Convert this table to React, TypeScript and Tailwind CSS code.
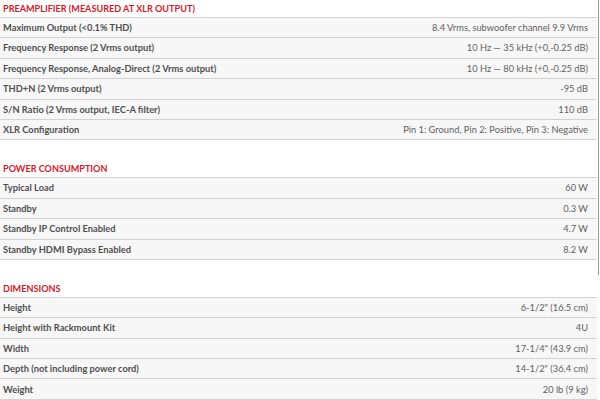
import React from "react";

type Row = [string, string];
const sections: { title: string; rows: Row[] }[] = [
  {
    title: "PREAMPLIFIER (MEASURED AT XLR OUTPUT)",
    rows: [
      ["Maximum Output (<0.1% THD)", "8.4 Vrms, subwoofer channel 9.9 Vrms"],
      ["Frequency Response (2 Vrms output)", "10 Hz — 35 kHz (+0,-0.25 dB)"],
      ["Frequency Response, Analog-Direct (2 Vrms output)", "10 Hz — 80 kHz (+0,-0.25 dB)"],
      ["THD+N (2 Vrms output)", "-95 dB"],
      ["S/N Ratio (2 Vrms output, IEC-A filter)", "110 dB"],
      ["XLR Configuration", "Pin 1: Ground, Pin 2: Positive, Pin 3: Negative"],
    ],
  },
  {
    title: "POWER CONSUMPTION",
    rows: [
      ["Typical Load", "60 W"],
      ["Standby", "0.3 W"],
      ["Standby IP Control Enabled", "4.7 W"],
      ["Standby HDMI Bypass Enabled", "8.2 W"],
    ],
  },
  {
    title: "DIMENSIONS",
    rows: [
      ["Height", "6-1/2\" (16.5 cm)"],
      ["Height with Rackmount Kit", "4U"],
      ["Width", "17-1/4\" (43.9 cm)"],
      ["Depth (not including power cord)", "14-1/2\" (36.4 cm)"],
      ["Weight", "20 lb (9 kg)"],
    ],
  },
];

export default function App() {
  return (
    <div className="w-[600px] h-[400px] overflow-hidden bg-white flex" style={{ fontFamily: "Lato, 'Noto Sans', sans-serif" }}>
      <div className="w-[597px] flex flex-col">
        {sections.map((s, i) => (
          <div key={s.title} className={i === 0 ? "" : "mt-[20px]"}>
            <div className="h-[18px] border-b border-[#d2d2d2] pl-[3px] flex items-center text-[9.1px] font-bold text-[#d5192b] leading-none">
              {s.title}
            </div>
            {s.rows.map(([k, v]) => (
              <div
                key={k}
                className="h-[20.4px] border-b border-[#d2d2d2] bg-[#f7f7f7] flex items-center justify-between pl-[3px] pr-[9px] text-[9.3px] leading-none"
              >
                <span className="font-bold text-[#4f4f4f]">{k}</span>
                <span className="text-[#5f5f5f]">{v}</span>
              </div>
            ))}
          </div>
        ))}
      </div>
      <div className="w-[1px] ml-[1px] h-[275px] bg-[#9a9a9a]" />
    </div>
  );
}
